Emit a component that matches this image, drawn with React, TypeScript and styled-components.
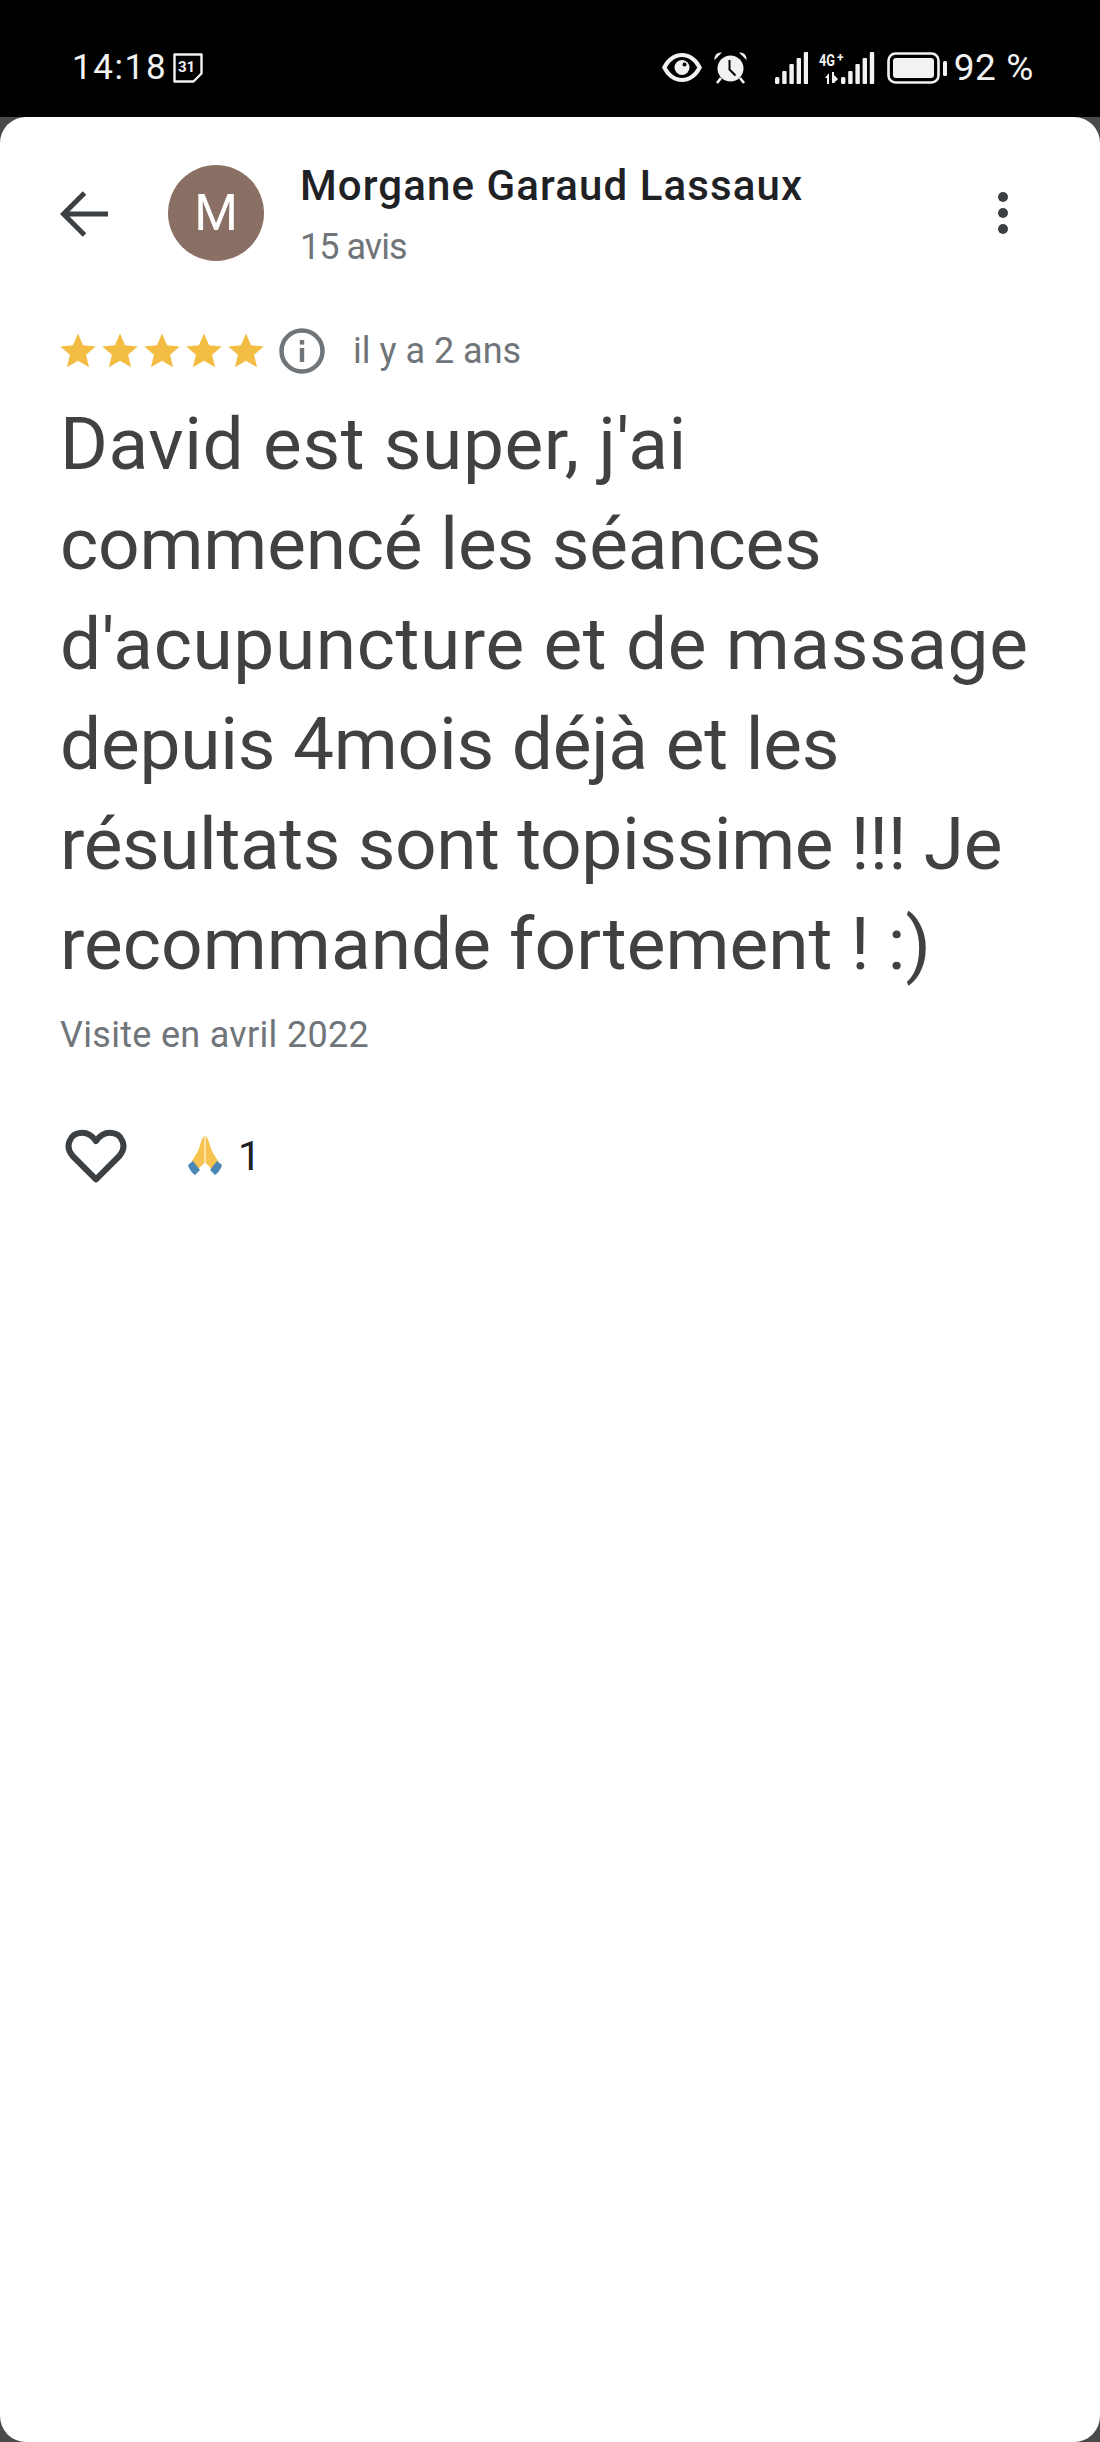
import styled, { createGlobalStyle } from "styled-components";

const GlobalStyle = createGlobalStyle`
  html, body {
    margin: 0;
    padding: 0;
    background: #000;
  }

  * {
    box-sizing: border-box;
  }
`;

const Screen = styled.div`
  width: 1100px;
  height: 2442px;
  display: flex;
  flex-direction: column;
  overflow: hidden;
  background: #4a4a4a;
  font-family: Roboto, "Liberation Sans", sans-serif;
`;

const StatusBar = styled.div`
  height: 117px;
  flex: none;
  background: #000;
  color: #f2f2f2;
  display: flex;
  justify-content: space-between;
  align-items: center;
  padding: 18px 66px 0 72px;
`;

const StatusGroup = styled.div`
  display: flex;
  align-items: center;
`;

const Clock = styled.span`
  font-size: 35px;
  letter-spacing: 1.6px;
  margin-right: 5px;
`;

const Percent = styled.span`
  font-size: 37px;
  letter-spacing: 0.6px;
  margin-left: 6px;
`;

const StatusIcon = styled.svg<{ $gap?: number }>`
  display: block;
  flex: none;
  margin-right: ${({ $gap }) => $gap ?? 0}px;
`;

const Sheet = styled.main`
  flex: 1;
  background: #fff;
  border-radius: 26px;
  padding: 48px 60px 0;
`;

const Header = styled.header`
  display: flex;
  align-items: flex-start;
`;

const BackIcon = styled.svg`
  flex: none;
  width: 48px;
  height: 48px;
  margin: 25px 60px 0 0;
`;

const Avatar = styled.div`
  flex: none;
  width: 96px;
  height: 96px;
  border-radius: 50%;
  background: #8a6f65;
  color: #fff;
  font-size: 50px;
  display: flex;
  align-items: center;
  justify-content: center;
  margin-right: 36px;
`;

const Author = styled.div`
  flex: 1;
  display: flex;
  flex-direction: column;
`;

const Name = styled.div`
  font-size: 42px;
  line-height: 48px;
  font-weight: 500;
  letter-spacing: 1.1px;
  color: #202124;
  margin-top: -3px;
`;

const Muted = styled.div`
  font-size: 36px;
  line-height: 42px;
  color: #70757a;
`;

const ReviewCount = styled(Muted)`
  margin-top: 16px;
  letter-spacing: -1px;
`;

const Dots = styled.div`
  flex: none;
  display: flex;
  flex-direction: column;
  gap: 6px;
  margin: 27px 32px 0 0;
`;

const Dot = styled.span`
  width: 10px;
  height: 10px;
  border-radius: 50%;
  background: #3c4043;
`;

const Meta = styled.div`
  display: flex;
  align-items: center;
  margin-top: 60px;
`;

const Stars = styled.div`
  display: flex;
  gap: 4px;
  margin: 0 14px 0 -1px;
`;

const StarIcon = styled.svg`
  display: block;
  width: 38px;
  height: 38px;
`;

const InfoIcon = styled.svg`
  display: block;
  width: 46px;
  height: 46px;
  margin-right: 28px;
`;

const ReviewText = styled.p`
  margin: 20px 0 0;
  font-size: 73px;
  line-height: 100px;
  color: #404142;
`;

const ReviewLine = styled.span<{ $tracking: number }>`
  display: block;
  letter-spacing: ${({ $tracking }) => $tracking}px;
`;

const VisitDate = styled(Muted)`
  margin-top: 20px;
  letter-spacing: 0.3px;
`;

const Actions = styled.div`
  display: flex;
  align-items: center;
  margin-top: 72px;
`;

const HeartIcon = styled.svg`
  display: block;
  width: 62px;
  height: 56px;
  margin: 0 60px 0 5px;
`;

const PrayIcon = styled.svg`
  display: block;
  width: 36px;
  height: 42px;
  margin-right: 15px;
`;

const Count = styled.span`
  font-size: 41px;
  color: #202124;
`;

const reviewLines = [
  { text: "David est super, j'ai", tracking: 0.6 },
  { text: "commencé les séances", tracking: -0.18 },
  { text: "d'acupuncture et de massage", tracking: 0.6 },
  { text: "depuis 4mois déjà et les", tracking: -0.24 },
  { text: "résultats sont topissime !!! Je", tracking: -0.4 },
  { text: "recommande fortement ! :)", tracking: 0.04 },
];

const Star = () => (
  <StarIcon viewBox="0 0 24 24">
    <path
      fill="#f2bd42"
      d="M12 1l3.200 7.400 8 .7-6.100 5.300 1.900 7.900-7-4.200-7 4.200 1.900-7.900L.8 9.100l8-.7z"
    />
  </StarIcon>
);

const SignalBars = ({ x }: { x: number }) => (
  <>
    <rect x={x} y="25" width="4.400" height="7" rx="1.500" />
    <rect x={x + 7.200} y="19" width="4.400" height="13" rx="1" />
    <rect x={x + 14.400} y="12" width="4.400" height="20" rx="1" />
    <rect x={x + 21.600} y="6" width="4.400" height="26" rx="1" />
    <rect x={x + 28.800} y="0" width="4.400" height="32" rx="1" />
  </>
);

const App = () => {
  return (
    <Screen>
      <GlobalStyle />
      <StatusBar>
        <StatusGroup>
          <Clock>14:18</Clock>
          <StatusIcon width="32" height="32" viewBox="0 0 32 32">
            <path
              d="M2.500 2.500h27v19l-8 8h-19z"
              fill="none"
              stroke="#f2f2f2"
              strokeWidth="2.400"
              strokeLinejoin="round"
            />
            <text
              x="6"
              y="20"
              fontSize="15"
              fontWeight="700"
              fill="#f2f2f2"
              fontFamily="Roboto, sans-serif"
            >
              31
            </text>
          </StatusIcon>
        </StatusGroup>
        <StatusGroup>
          <StatusIcon $gap={12} width="40" height="29" viewBox="0 0 40 29">
            <path
              fillRule="evenodd"
              fill="#f2f2f2"
              d="M20 0c8.500 0 16 5.800 20 14.500C36 23.200 28.500 29 20 29S4 23.200 0 14.500C4 5.800 11.500 0 20 0zm0 4C14 4 8.400 8 4.700 14.500 8.400 21 14 25 20 25s11.600-4 15.300-10.500C31.600 8 26 4 20 4z"
            />
            <circle cx="20" cy="14.500" r="7.500" fill="#f2f2f2" />
            <circle cx="22.500" cy="11.500" r="2" fill="#000" />
          </StatusIcon>
          <StatusIcon $gap={28} width="33" height="32" viewBox="0 0 33 32">
            <circle cx="16.500" cy="16.500" r="13" fill="#f2f2f2" />
            <path d="M15.500 8v9.500l6 6" fill="none" stroke="#000" strokeWidth="2" />
            <path d="M0.500 8C0 3 3.500 0 8 0.500zM32.500 8C33 3 29.500 0 25 0.500z" fill="#f2f2f2" />
            <path d="M7 26l-4 5M26 26l4 5" stroke="#f2f2f2" strokeWidth="2.600" />
          </StatusIcon>
          <StatusIcon $gap={11} width="33" height="32" viewBox="0 0 33 32" fill="#f2f2f2">
            <SignalBars x={0} />
          </StatusIcon>
          <StatusIcon $gap={12} width="56" height="48" viewBox="0 -8 56 48" fill="#f2f2f2">
            <text
              x="0"
              y="14"
              fontSize="17"
              fontWeight="700"
              textLength="16"
              lengthAdjust="spacingAndGlyphs"
              fontFamily="Roboto, sans-serif"
            >
              4G
            </text>
            <text x="18" y="10" fontSize="12" fontWeight="700" fontFamily="Roboto, sans-serif">
              +
            </text>
            <path d="M6 26l4-5v11H8v-6zM13 20h2v3l4 4-4 4h-2z" />
            <SignalBars x={22} />
          </StatusIcon>
          <StatusIcon width="61" height="32" viewBox="0 0 61 32">
            <rect
              x="1.500"
              y="1.500"
              width="50"
              height="29"
              rx="7"
              fill="none"
              stroke="#f2f2f2"
              strokeWidth="2.600"
            />
            <rect x="6" y="6" width="41" height="20" rx="3" fill="#f2f2f2" />
            <rect x="56" y="9" width="4" height="15" rx="1.500" fill="#f2f2f2" />
          </StatusIcon>
          <Percent>92 %</Percent>
        </StatusGroup>
      </StatusBar>
      <Sheet>
        <Header>
          <BackIcon viewBox="0 0 48 48">
            <path
              d="M48 24H4M24.500 3 3.500 24l21 21"
              fill="none"
              stroke="#3c4043"
              strokeWidth="5"
            />
          </BackIcon>
          <Avatar>M</Avatar>
          <Author>
            <Name>Morgane Garaud Lassaux</Name>
            <ReviewCount>15 avis</ReviewCount>
          </Author>
          <Dots>
            <Dot />
            <Dot />
            <Dot />
          </Dots>
        </Header>
        <Meta>
          <Stars>
            <Star />
            <Star />
            <Star />
            <Star />
            <Star />
          </Stars>
          <InfoIcon viewBox="0 0 46 46">
            <circle cx="23" cy="23" r="20.500" fill="none" stroke="#70757a" strokeWidth="4.500" />
            <rect x="20.800" y="20" width="4.400" height="14" fill="#70757a" />
            <rect x="20.800" y="12" width="4.400" height="4.600" fill="#70757a" />
          </InfoIcon>
          <Muted>il y a 2 ans</Muted>
        </Meta>
        <ReviewText>
          {reviewLines.map((line) => (
            <ReviewLine key={line.text} $tracking={line.tracking}>
              {line.text}
            </ReviewLine>
          ))}
        </ReviewText>
        <VisitDate>Visite en avril 2022</VisitDate>
        <Actions>
          <HeartIcon viewBox="0 0 66 60">
            <path
              d="M33 55 8 30C-1 20 5 5 18 5c6 0 11 3 15 9 4-6 9-9 15-9 13 0 19 15 10 25z"
              fill="none"
              stroke="#3c4043"
              strokeWidth="6.500"
              strokeLinejoin="round"
            />
          </HeartIcon>
          <PrayIcon viewBox="0 0 36 42">
            <path
              fill="#f6c350"
              d="M17.500 1c-2 1-3.500 5-5 11-1.500 5-6 11-8.500 16l7 6 6.500-6zM18.500 1c2 1 3.500 5 5 11 1.500 5 6 11 8.500 16l-7 6-6.500-6z"
            />
            <path fill="#4a87b5" d="M1 30l5-4 7 9-5 5c-3-2-6-6-7-10zM35 30l-5-4-7 9 5 5c3-2 6-6 7-10z" />
          </PrayIcon>
          <Count>1</Count>
        </Actions>
      </Sheet>
    </Screen>
  );
};

export default App;
